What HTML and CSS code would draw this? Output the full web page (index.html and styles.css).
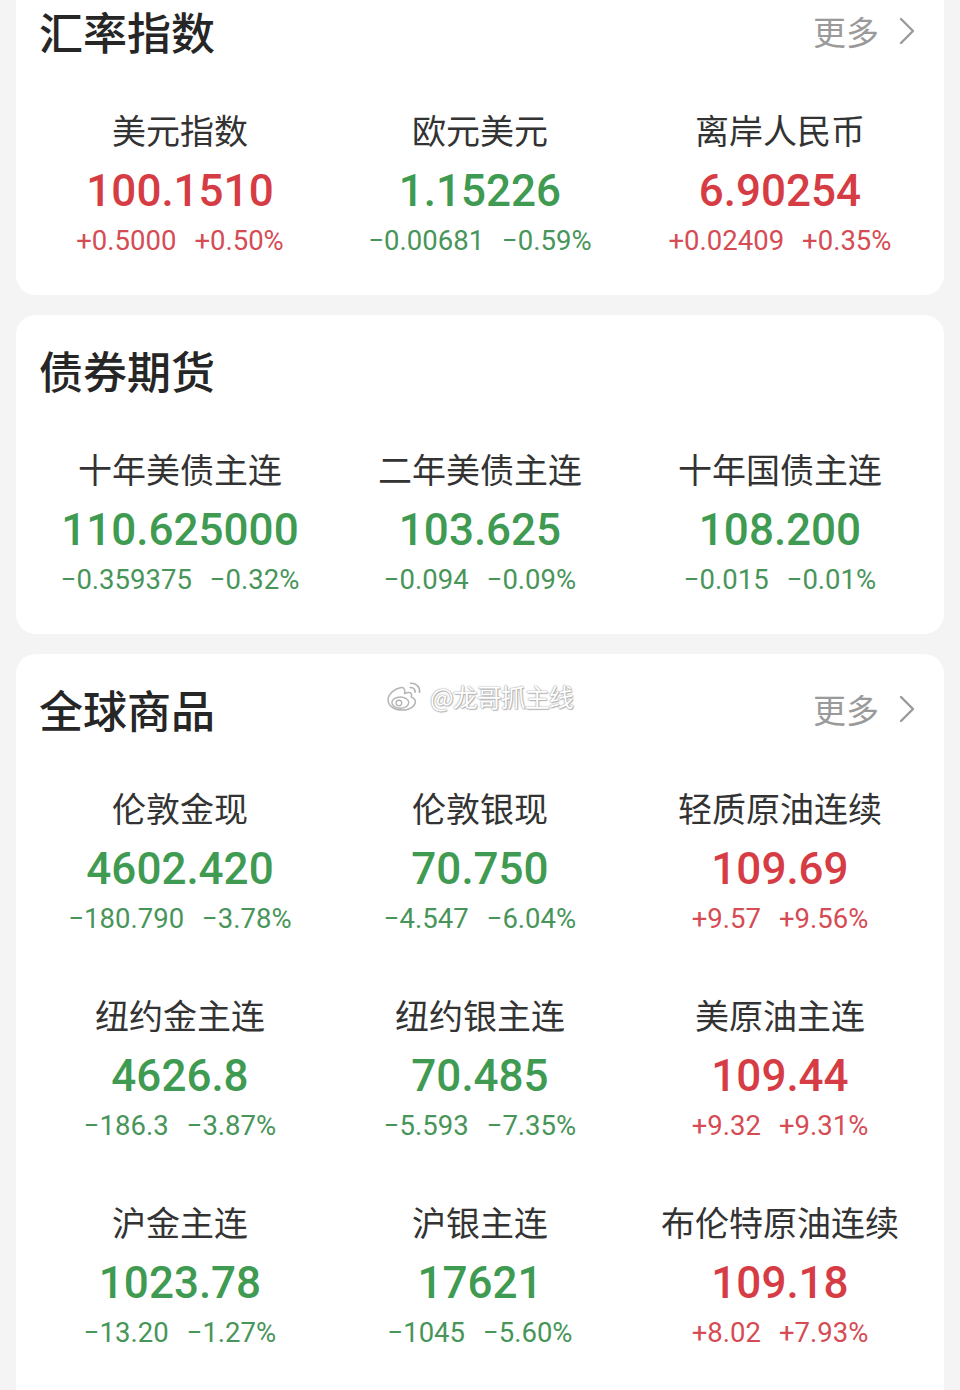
FILE: index.html
```html
<!DOCTYPE html>
<html lang="zh-CN">
<head>
<meta charset="utf-8">
<title>行情</title>
<link rel="stylesheet" href="styles.css">
</head>
<body>
<div class="page">
  <section class="card">
    <div class="card-head">
      <h2 class="card-title">汇率指数</h2>
      <a class="more">更多<svg class="chev" viewBox="0 0 16 28" width="16" height="28"><path d="M2 2 L14 14 L2 26" fill="none" stroke="#9a9a9a" stroke-width="2.4" stroke-linecap="round" stroke-linejoin="round"/></svg></a>
    </div>
    <div class="grid">
      <div class="item up"><div class="label">美元指数</div><div class="value">100.1510</div><div class="change"><span>+0.5000</span><span>+0.50%</span></div></div>
      <div class="item down"><div class="label">欧元美元</div><div class="value">1.15226</div><div class="change"><span>−0.00681</span><span>−0.59%</span></div></div>
      <div class="item up"><div class="label">离岸人民币</div><div class="value">6.90254</div><div class="change"><span>+0.02409</span><span>+0.35%</span></div></div>
    </div>
  </section>

  <section class="card">
    <div class="card-head">
      <h2 class="card-title">债券期货</h2>
    </div>
    <div class="grid">
      <div class="item down"><div class="label">十年美债主连</div><div class="value">110.625000</div><div class="change"><span>−0.359375</span><span>−0.32%</span></div></div>
      <div class="item down"><div class="label">二年美债主连</div><div class="value">103.625</div><div class="change"><span>−0.094</span><span>−0.09%</span></div></div>
      <div class="item down"><div class="label">十年国债主连</div><div class="value">108.200</div><div class="change"><span>−0.015</span><span>−0.01%</span></div></div>
    </div>
  </section>

  <section class="card card-last">
    <div class="card-head">
      <h2 class="card-title">全球商品</h2>
      <a class="more">更多<svg class="chev" viewBox="0 0 16 28" width="16" height="28"><path d="M2 2 L14 14 L2 26" fill="none" stroke="#9a9a9a" stroke-width="2.4" stroke-linecap="round" stroke-linejoin="round"/></svg></a>
    </div>
    <div class="watermark">
      <svg class="wb-logo" viewBox="0 0 40 34" width="38" height="32">
        <path d="M16 8 C9 9 2 15 2 21 C2 28 9 32 17 32 C26 32 31 27 31 23 C31 20 28 18.5 26.5 18 C27.5 15.5 27 13.5 24.5 13.2 C22.5 13 20.5 14 19.5 14.5 C20 12.5 20 10.5 19 9.2 C18.3 8.3 17.3 7.9 16 8 Z" fill="#fff" stroke="#b5b5b5" stroke-width="1.6" stroke-linejoin="round"/>
        <ellipse cx="15" cy="24" rx="9" ry="6" fill="#fff" stroke="#b5b5b5" stroke-width="1.5"/>
        <circle cx="13.5" cy="24.5" r="3" fill="#fff" stroke="#b5b5b5" stroke-width="1.4"/>
        <path d="M26 3.5 C31 3 36 7 35.5 13" fill="none" stroke="#b5b5b5" stroke-width="1.8" stroke-linecap="round"/>
        <path d="M25.5 8 C28.5 7.8 31 10 30.8 12.8" fill="none" stroke="#b5b5b5" stroke-width="1.8" stroke-linecap="round"/>
      </svg>
      <span class="wb-text">@龙哥抓主线</span>
    </div>
    <div class="grid">
      <div class="item down"><div class="label">伦敦金现</div><div class="value">4602.420</div><div class="change"><span>−180.790</span><span>−3.78%</span></div></div>
      <div class="item down"><div class="label">伦敦银现</div><div class="value">70.750</div><div class="change"><span>−4.547</span><span>−6.04%</span></div></div>
      <div class="item up"><div class="label">轻质原油连续</div><div class="value">109.69</div><div class="change"><span>+9.57</span><span>+9.56%</span></div></div>
      <div class="item down"><div class="label">纽约金主连</div><div class="value">4626.8</div><div class="change"><span>−186.3</span><span>−3.87%</span></div></div>
      <div class="item down"><div class="label">纽约银主连</div><div class="value">70.485</div><div class="change"><span>−5.593</span><span>−7.35%</span></div></div>
      <div class="item up"><div class="label">美原油主连</div><div class="value">109.44</div><div class="change"><span>+9.32</span><span>+9.31%</span></div></div>
      <div class="item down"><div class="label">沪金主连</div><div class="value">1023.78</div><div class="change"><span>−13.20</span><span>−1.27%</span></div></div>
      <div class="item down"><div class="label">沪银主连</div><div class="value">17621</div><div class="change"><span>−1045</span><span>−5.60%</span></div></div>
      <div class="item up"><div class="label">布伦特原油连续</div><div class="value">109.18</div><div class="change"><span>+8.02</span><span>+7.93%</span></div></div>
    </div>
  </section>
</div>
</body>
</html>
```

FILE: styles.css
```css
html, body {
  margin: 0;
  padding: 0;
}
body {
  background: #f4f4f4;
  width: 960px;
  height: 1390px;
  overflow: hidden;
  font-family: Roboto, "Noto Sans CJK SC", sans-serif;
}
.page {
  display: flex;
  flex-direction: column;
  gap: 20px;
  padding: 0 16px;
  margin-top: -24px;
}
.card {
  position: relative;
  background: #ffffff;
  border-radius: 20px;
  padding: 27px 0 35px;
}
.card-last {
  padding-bottom: 80px;
}
.card-head {
  display: flex;
  align-items: center;
  justify-content: space-between;
  height: 56px;
  padding: 0 29px 0 23px;
}
.card-title {
  margin: 0;
  font-family: "Noto Sans CJK SC", sans-serif;
  font-size: 44px;
  line-height: 56px;
  font-weight: 500;
  color: #262626;
}
.more {
  display: flex;
  align-items: center;
  gap: 20px;
  font-family: "Noto Sans CJK SC", sans-serif;
  font-size: 33px;
  color: #9a9a9a;
  line-height: 44px;
}
.chev {
  display: block;
}
.grid {
  display: grid;
  grid-template-columns: repeat(3, 1fr);
  row-gap: 55px;
  padding: 0 14px;
  margin-top: 49px;
}
.item {
  display: flex;
  flex-direction: column;
  align-items: center;
}
.label {
  font-family: "Noto Sans CJK SC", sans-serif;
  font-size: 34px;
  line-height: 44px;
  color: #333333;
  margin-bottom: 8px;
}
.value {
  font-family: Roboto, sans-serif;
  font-weight: 500;
  font-size: 44px;
  line-height: 60px;
  margin-top: 1px;
}
.change {
  display: flex;
  gap: 18px;
  font-family: Roboto, sans-serif;
  font-size: 27.5px;
  line-height: 38px;
  margin-top: 1px;
}
.up .value { color: #d63c44; }
.up .change { color: #d54c55; }
.down .value { color: #3f9a52; }
.down .change { color: #48955a; }

.watermark {
  position: absolute;
  left: 370px;
  top: 26px;
  display: flex;
  align-items: center;
  gap: 6px;
}
.wb-text {
  font-family: "Noto Sans CJK SC", sans-serif;
  font-size: 25px;
  line-height: 32px;
  color: #ffffff;
  text-shadow: 0 0 1px #999, 0 0 2px #aaa, 1px 1px 1px #bbb;
  letter-spacing: -1px;
}
```
